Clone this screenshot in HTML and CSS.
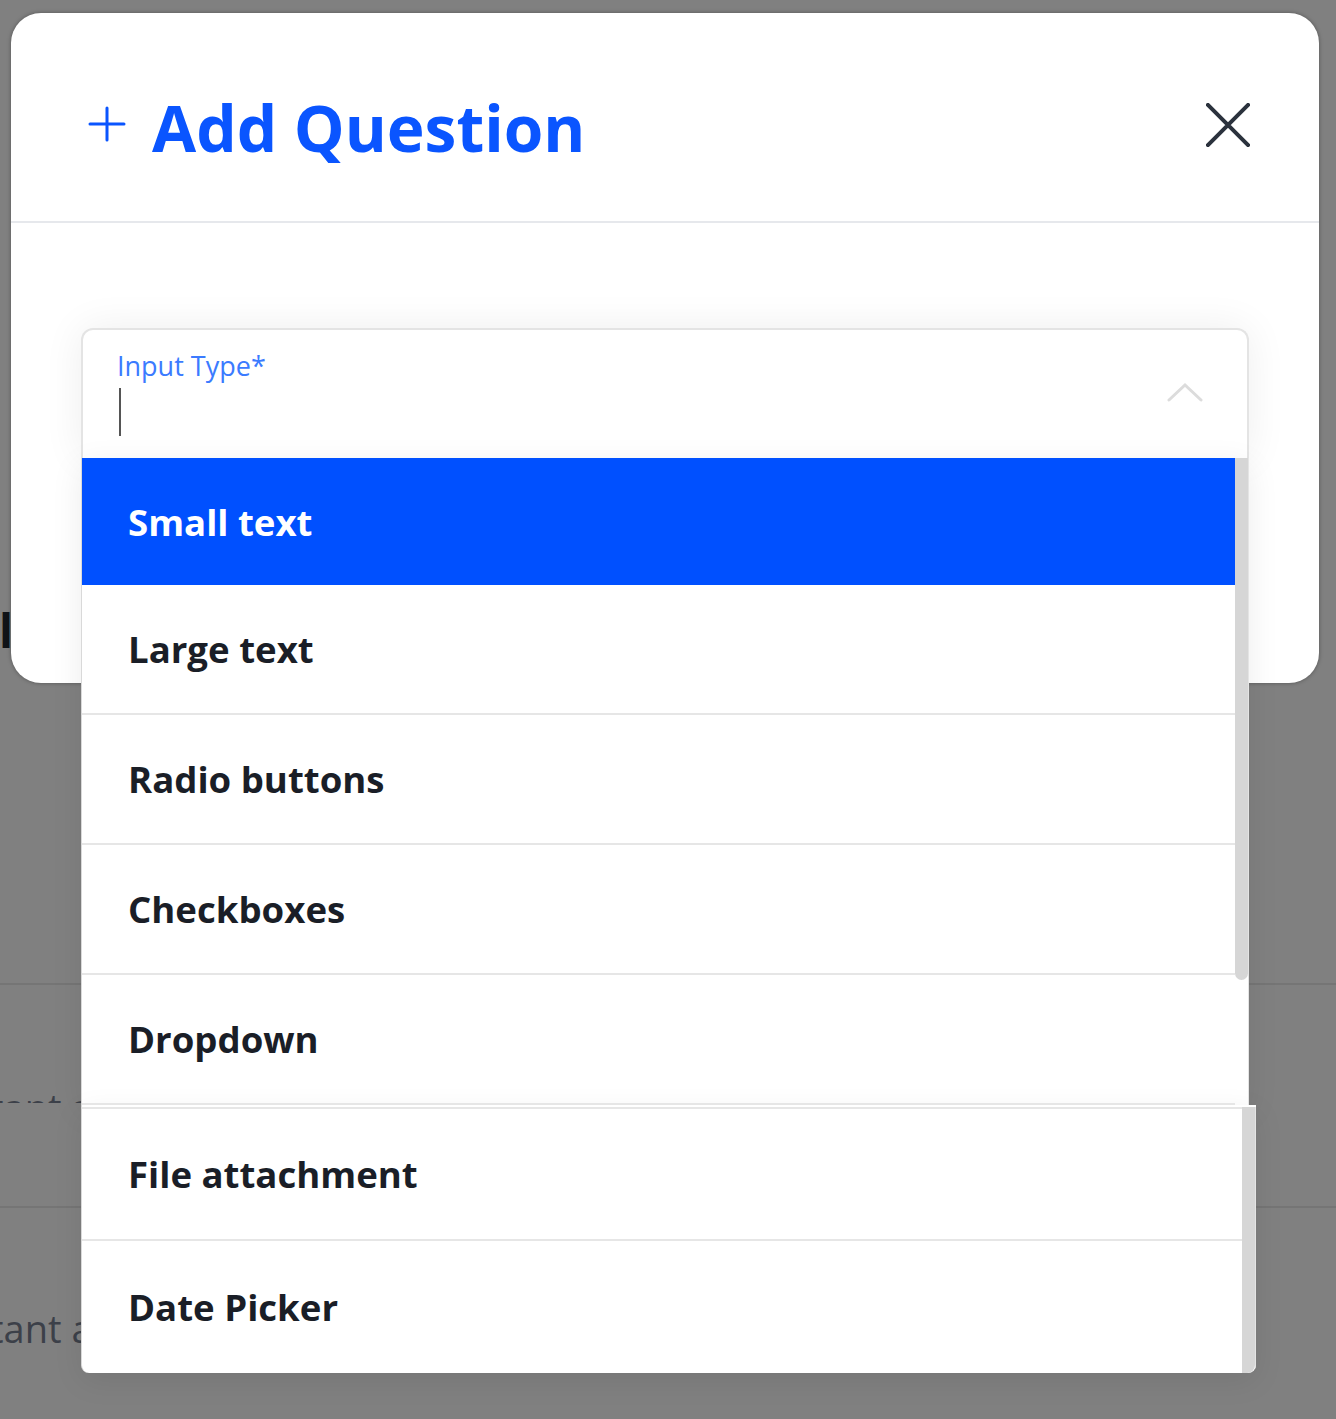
FILE: index.html
```html
<!DOCTYPE html>
<html lang="en">
<head>
<meta charset="utf-8">
<title>Add Question</title>
<link rel="stylesheet" href="styles.css">
</head>
<body>
<div class="backdrop">
  <div class="bg-row"><span class="bg-glyph">l</span></div>
  <div class="bg-line bg-line-1"></div>
  <div class="bg-cut"><span class="bg-text">tant a</span></div>
  <div class="bg-line bg-line-2"></div>
  <div class="bg-text bg-text-2">tant a</div>
</div>

<div class="modal">
  <header class="modal-header">
    <h1 class="title">
      <svg class="plus" width="38" height="36" viewBox="0 0 38 36"><path d="M19 2V34M2 18H36" stroke="#0a55ff" stroke-width="3" stroke-linecap="round" fill="none"/></svg>
      <span>Add Question</span>
    </h1>
    <button class="close" aria-label="Close">
      <svg width="46" height="46" viewBox="0 0 46 46"><path d="M2 2L44 44M44 2L2 44" stroke="#2b323d" stroke-width="4.2" stroke-linecap="round" fill="none"/></svg>
    </button>
  </header>
  <div class="modal-body">
    <div class="select">
      <div class="field">
        <div class="field-text">
          <label class="label">Input Type*</label>
          <span class="caret"></span>
        </div>
        <svg class="chevron" width="36" height="22" viewBox="0 0 36 22"><path d="M2 19L18 4L34 19" stroke="#dcdcdc" stroke-width="3" stroke-linecap="round" fill="none"/></svg>
      </div>
      <div class="menu">
        <div class="section section-1">
          <ul class="options">
            <li class="option selected">Small text</li>
            <li class="option">Large text</li>
            <li class="option">Radio buttons</li>
            <li class="option">Checkboxes</li>
            <li class="option">Dropdown</li>
          </ul>
          <div class="scroll"><div class="thumb thumb-1"></div></div>
        </div>
        <div class="section section-2">
          <ul class="options">
            <li class="option">File attachment</li>
            <li class="option">Date Picker</li>
          </ul>
          <div class="scroll"><div class="thumb thumb-2"></div></div>
        </div>
      </div>
    </div>
  </div>
</div>
</body>
</html>
```

FILE: styles.css
```css
* { box-sizing: border-box; }
html, body { margin: 0; padding: 0; }
body {
  width: 1336px;
  height: 1419px;
  overflow: hidden;
  background: #808080;
  font-family: "Open Sans", "Noto Sans", sans-serif;
  position: relative;
}

/* backdrop page (under the dimming overlay) */
.backdrop {
  display: flex;
  flex-direction: column;
  width: 100%;
}
.bg-row {
  height: 0;
  margin-top: 600px;
}
.bg-glyph {
  display: block;
  margin-left: -1px;
  font-size: 46px;
  font-weight: 700;
  line-height: 60px;
  color: #101318;
}
.bg-line {
  height: 2px;
  background: #757575;
}
.bg-line-1 { margin-top: 383px; }
.bg-cut {
  height: 118px;
  overflow: hidden;
  position: relative;
}
.bg-text {
  display: block;
  margin-left: -10px;
  font-size: 38px;
  line-height: 50px;
  color: #3c4049;
  padding-top: 97px;
}
.bg-line-2 { margin-top: 103px; }
.bg-text-2 {
  padding-top: 0;
  margin-top: 95px;
}

/* modal */
.modal {
  position: absolute;
  top: 13px;
  left: 11px;
  width: 1308px;
  height: 670px;
  background: #fff;
  border-radius: 30px;
  box-shadow: 0 0 4px rgba(0,0,0,0.35);
}
.modal-header {
  height: 210px;
  border-bottom: 2px solid #e6e8ec;
  display: flex;
  align-items: center;
  justify-content: space-between;
  padding: 0 69px 0 77px;
}
.title {
  margin: 0;
  display: flex;
  align-items: center;
  gap: 26px;
  font-size: 64px;
  font-weight: 700;
  color: #0a55ff;
  padding-top: 20px;
}
.plus { margin-top: -6px; }
.close {
  border: 0;
  background: transparent;
  padding: 0;
  display: flex;
  margin-top: 16px;
}
.close svg { width: 44px; height: 44px; }

.modal-body {
  padding: 105px 70px 0;
}
.select {
  position: relative;
}
.field {
  height: 130px;
  border: 2px solid #e4e4e4;
  border-bottom: 0;
  border-radius: 12px 12px 0 0;
  display: flex;
  justify-content: space-between;
  padding: 18px 44px 0 35px;
  box-shadow: 0 0 40px rgba(0,0,0,0.07);
  background: #fff;
}
.field-text {
  display: flex;
  flex-direction: column;
}
.label {
  font-size: 27px;
  line-height: 36px;
  color: #3b7bff;
  font-weight: 400;
  margin-left: -1px;
}
.caret {
  width: 2px;
  height: 48px;
  background: #555;
  margin-left: 1px;
  margin-top: 4px;
}
.chevron {
  margin-top: 33px;
}

.menu {
  position: absolute;
  top: 130px;
  left: 0;
  width: 1168px;
  z-index: 2;
}
.section {
  display: flex;
  background: #fff;
  border-left: 1px solid #d9d9d9;
  box-shadow: 0 8px 30px rgba(0,0,0,0.08);
}
.section-1 {
  width: 1168px;
  height: 647px;
}
.section-2 {
  width: 1175px;
  height: 268px;
  padding-top: 2px;
  border-radius: 0 0 8px 8px;
  overflow: hidden;
}
.options {
  list-style: none;
  margin: 0;
  padding: 0;
  flex: 1;
}
.option {
  height: 130px;
  border-bottom: 2px solid #e6e6e6;
  display: flex;
  align-items: center;
  padding-left: 46px;
  font-size: 36.6px;
  font-weight: 700;
  color: #1a1e27;
}
.option.selected {
  height: 127px;
  border-bottom: 0;
  background: #0050ff;
  color: #fff;
}
.section-2 .options { border-top: 2px solid #e6e6e6; }
.section-2 .option:first-child { height: 132px; }
.section-2 .option:last-child { border-bottom: 0; height: 132px; }
.scroll {
  width: 14px;
  flex: none;
  border-right: 1px solid #e4e4e4;
}
.thumb {
  background: #d6d6d6;
  width: 13px;
}
.thumb-1 {
  height: 522px;
  border-radius: 0 0 7px 7px;
}
.thumb-2 {
  height: 266px;
  border-radius: 0 0 8px 0;
}
```
